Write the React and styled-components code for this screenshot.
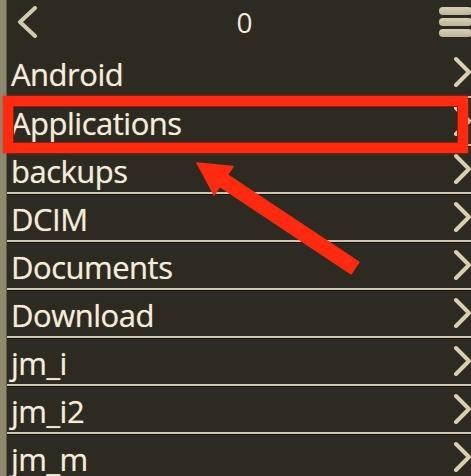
import * as React from 'react';
import styled, { createGlobalStyle } from 'styled-components';

const GlobalStyles = createGlobalStyle`
  html, body {
    margin: 0;
    padding: 0;
    background: #2d2a21;
  }
`;

const Screen = styled.div`
  position: relative;
  display: flex;
  width: 471px;
  height: 476px;
  overflow: hidden;
  background: #2d2a21;
  font-family: 'Open Sans', 'Noto Sans', sans-serif;
`;

const Strip = styled.div`
  width: 6px;
  flex-shrink: 0;
  background: #8e886e;
  border-right: 1px solid #5f5a48;
`;

const Main = styled.div`
  flex: 1;
  display: flex;
  flex-direction: column;
  min-width: 0;
`;

const Header = styled.div`
  height: 48px;
  flex-shrink: 0;
  display: flex;
  align-items: flex-start;
  justify-content: space-between;
`;

const Title = styled.div`
  color: #f2ead6;
  font-size: 28px;
  line-height: 1;
  margin-top: 8px;
  margin-left: 10px;
`;

const IconButton = styled.div`
  display: flex;
  padding-top: ${(p) => p.top}px;
  padding-left: ${(p) => p.left || 0}px;
`;

const MenuIcon = styled.div`
  display: flex;
  flex-direction: column;
  gap: 3px;
  width: 33px;
  margin-right: -1px;
  padding-top: 7px;
`;

const MenuBar = styled.span`
  display: block;
  height: 8px;
  border-radius: 4px;
  background: linear-gradient(#d6cfb6, #bdb59b);
`;

const List = styled.div`
  display: flex;
  flex-direction: column;
`;

const Row = styled.div`
  position: relative;
  height: 48px;
  box-sizing: border-box;
  display: flex;
  align-items: center;
  justify-content: space-between;
  padding-left: 4px;
  border-top: ${(p) => (p.first ? 'none' : '2px solid #cdc5ac')};
  box-shadow: ${(p) => (p.first ? 'none' : 'inset 0 1px 0 #14120d')};
`;

const Label = styled.span`
  color: #f4ecd8;
  font-size: 31px;
  letter-spacing: -0.5px;
  line-height: 1;
  padding-top: 5px;
  white-space: nowrap;
  text-shadow: 0 0 1px rgba(244, 236, 216, 0.6);
`;

const HighlightBox = styled.div`
  position: absolute;
  z-index: 2;
  top: -2px;
  left: -4px;
  right: 3px;
  bottom: -9px;
  border: 10px solid #ff2a0f;
  box-shadow: 0 0 3px rgba(255, 40, 10, 0.7), inset 0 0 0 1px #9a1a08;
  pointer-events: none;
`;

const ArrowLayer = styled.svg`
  position: absolute;
  z-index: 3;
  top: 0;
  left: 0;
  pointer-events: none;
`;

const Back = () => (
  <svg width="24" height="32" viewBox="0 0 24 32">
    <polyline
      points="19,2 4,16 19,30"
      fill="none"
      stroke="#d2caaf"
      strokeWidth="4"
      strokeLinecap="round"
      strokeLinejoin="round"
    />
  </svg>
);

const Chevron = () => (
  <svg width="19" height="32" viewBox="0 0 19 32">
    <polyline
      points="4,3 17,16 4,29"
      fill="none"
      stroke="#d8cfb3"
      strokeWidth="4"
      strokeLinecap="round"
      strokeLinejoin="round"
    />
  </svg>
);

const folders = [
  'Android',
  'Applications',
  'backups',
  'DCIM',
  'Documents',
  'Download',
  'jm_i',
  'jm_i2',
  'jm_m',
];

const App = () => {
  return (
    <>
      <GlobalStyles />
      <Screen>
        <Strip />
        <Main>
          <Header>
            <IconButton top={6} left={9}>
              <Back />
            </IconButton>
            <Title>0</Title>
            <MenuIcon>
              <MenuBar />
              <MenuBar />
              <MenuBar />
            </MenuIcon>
          </Header>
          <List>
            {folders.map((name, i) => (
              <Row key={name} first={i === 0}>
                <Label>{name}</Label>
                <Chevron />
                {name === 'Applications' && <HighlightBox />}
              </Row>
            ))}
          </List>
        </Main>
        <ArrowLayer width="471" height="476" viewBox="0 0 471 476">
          <polygon
            points="197,163 233,166.6 227.5,174.9 358.9,262.2 351.1,273.8 219.7,186.5 214.2,194.8"
            fill="#ff2a0f"
            stroke="#ff2a0f"
            strokeWidth="1.5"
            strokeLinejoin="round"
          />
        </ArrowLayer>
      </Screen>
    </>
  );
};

export default App;
